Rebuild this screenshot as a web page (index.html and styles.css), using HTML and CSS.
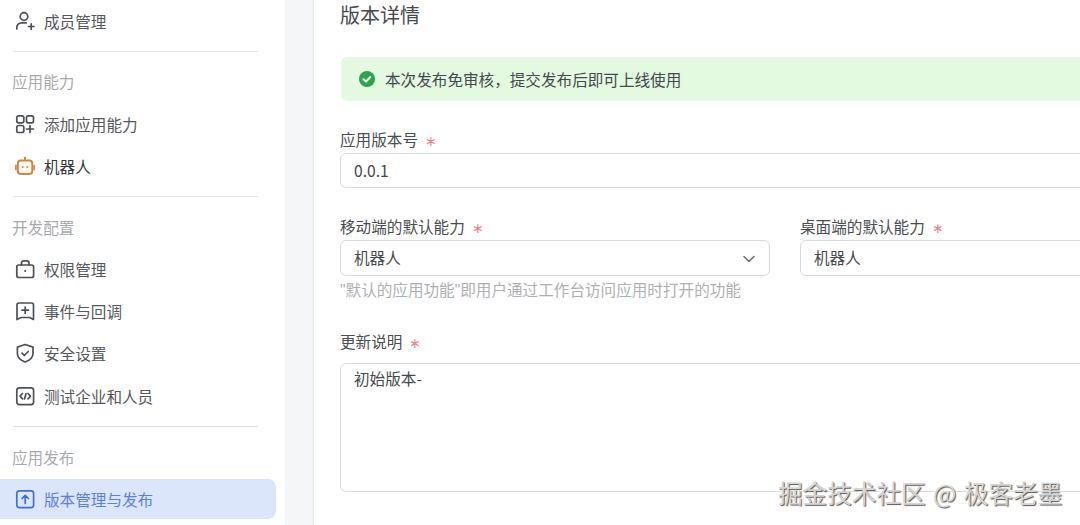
FILE: index.html
```html
<!DOCTYPE html>
<html lang="zh">
<head>
<meta charset="utf-8">
<title>版本详情</title>
<link rel="stylesheet" href="styles.css">
</head>
<body>
<div class="page">
  <nav class="side">
    <a class="item"><svg class="ico" viewBox="0 0 20 20"><circle cx="9" cy="5.500" r="3.800"/><path d="M1.800 18v-1.500c0-2.800 2-4.700 4.800-4.700h4.700"/><path d="M13.500 15.500h5.500M16.200 12.800v5.500"/></svg><span>成员管理</span></a>
    <hr class="rule rule-a">
    <div class="head">应用能力</div>
    <a class="item"><svg class="ico" viewBox="0 0 20 20"><rect x="1.800" y="1.800" width="7" height="7" rx="1.800"/><rect x="11.500" y="1.800" width="7" height="7" rx="1.800"/><rect x="1.800" y="11.500" width="7" height="7" rx="1.800"/><path d="M11.500 15h7M15 11.500v7"/></svg><span>添加应用能力</span></a>
    <a class="item"><svg class="ico ico-bot" viewBox="0 0 20 20"><rect class="face" x="2.800" y="4.500" width="14.500" height="13.500" rx="3"/><path d="M10 4.500V2.500"/><path d="M.9 9.500v4M19.100 9.500v4"/><circle class="dot" cx="10" cy="1.900" r="1.200"/><circle class="dot" cx="7.700" cy="11" r=".9"/><circle class="dot" cx="12.300" cy="11" r=".9"/></svg><span class="dark">机器人</span></a>
    <hr class="rule rule-b">
    <div class="head head-b">开发配置</div>
    <a class="item"><svg class="ico" viewBox="0 0 20 20"><rect x="1.800" y="6" width="16.800" height="12.500" rx="2"/><path d="M6.500 6V4.200C6.500 2.800 7.500 1.800 9 1.800h2.500C13 1.800 14 2.800 14 4.200V6"/><circle class="dot-d" cx="10.200" cy="12" r="1.100"/></svg><span>权限管理</span></a>
    <a class="item"><svg class="ico" viewBox="0 0 20 20"><path d="M2 4c0-1.100.9-2 2-2h12.500c1.100 0 2 .9 2 2v14.500l-4-2h-8.500l-4 2z"/><path d="M7 9.200h6.500M10.200 6v6.500"/></svg><span>事件与回调</span></a>
    <a class="item"><svg class="ico" viewBox="0 0 20 20"><path d="M10.200 1.500l7.800 2.600v6.400c0 4.200-3.200 6.800-7.800 8.500-4.600-1.700-7.800-4.300-7.800-8.500V4.100z"/><path d="M7 10.200l2.300 2.300 4-4"/></svg><span>安全设置</span></a>
    <a class="item item-last"><svg class="ico" viewBox="0 0 20 20"><rect x="1.800" y="1.800" width="16.800" height="16.800" rx="2.500"/><path d="M7.500 7.500l-2.500 2.700 2.500 2.700M13 7.500l2.500 2.700-2.500 2.700M11 7.500l-1.500 5.500"/></svg><span>测试企业和人员</span></a>
    <hr class="rule rule-c">
    <div class="head">应用发布</div>
    <a class="item active"><svg class="ico" viewBox="0 0 20 20"><rect x="1.800" y="1.800" width="16.800" height="16.800" rx="2.500"/><path d="M10.200 14.500v-8M7 9.500l3.200-3.200 3.200 3.200"/></svg><span>版本管理与发布</span></a>
  </nav>
  <div class="gutter"></div>
  <main class="main">
    <h1 class="title">版本详情</h1>
    <div class="alert">
      <svg class="ok" viewBox="0 0 16 16"><circle cx="8" cy="8" r="8"/><path d="M4.500 8.200l2.500 2.400 4.300-4.600"/></svg>
      <span>本次发布免审核&#xFF0C;提交发布后即可上线使用</span>
    </div>
    <div class="field f1">
      <label class="lab">应用版本号<i>∗</i></label>
      <div class="box wide">0.0.1</div>
    </div>
    <div class="cols">
      <div class="field">
        <label class="lab">移动端的默认能力<i>∗</i></label>
        <div class="box sel">机器人
          <svg class="chev" viewBox="0 0 12 8"><path d="M1 1.500l5 5 5-5"/></svg>
        </div>
        <p class="hint">"默认的应用功能"即用户通过工作台访问应用时打开的功能</p>
      </div>
      <div class="field">
        <label class="lab">桌面端的默认能力<i>∗</i></label>
        <div class="box sel">机器人</div>
      </div>
    </div>
    <div class="field f3">
      <label class="lab lab-t">更新说明<i>∗</i></label>
      <div class="box area">初始版本-</div>
    </div>
  </main>
</div>
<div class="mark">掘金技术社区 @ 极客老墨</div>
</body>
</html>
```
FILE: styles.css
```css
* { box-sizing: border-box; }
html, body { margin: 0; height: 525px; overflow: hidden; background: #fff; }
body {
  font-family: "Noto Sans CJK SC", "Liberation Sans", sans-serif;
  font-size: 15.600px;
  color: #4a4d52;
  position: relative;
}
.page { display: flex; height: 525px; width: 1080px; overflow: hidden; }
.side { width: 285px; flex: none; background: #fff; }
.gutter { width: 29px; flex: none; background: #f5f6f7; border-right: 1px solid #e6e7ea; }
.main { flex: 1; min-width: 0; padding: 0 0 0 26px; overflow: hidden; }

.item {
  display: flex; align-items: center; gap: 9px;
  height: 42px; width: 276px; padding-left: 15px;
  color: #55585d;
}
.item-last { margin-top: 1px; }
.item .dark { color: #33363a; }
.ico { width: 20px; height: 20px; flex: none; fill: none; stroke: #4d5055; stroke-width: 1.700; stroke-linecap: round; stroke-linejoin: round; }
.ico-bot { stroke: #c98a45; overflow: visible; }
.ico-bot .face { fill: #fdf6ec; stroke-width: 2; }
.ico-bot .dot { fill: #c98a45; stroke: none; }
.dot-d { fill: #4d5055; stroke: none; }
.rule { border: 0; height: 1px; background: #e6e7e9; margin: 9px 0 0 13px; width: 245px; }
.rule-c { background: #dcdde0; }
.head { height: 42px; line-height: 42px; padding-left: 12px; margin-top: 9px; color: #a8aaae; }
.rule-a + .head { margin-top: 8px; margin-bottom: 1px; }
.active { height: 40px; margin-top: 1px; border-radius: 0 8px 8px 0; background: #dce6fb; color: #5b80dd; }
.active .ico { stroke: #3f6fdc; }

.title { margin: 0; font-size: 20px; font-weight: 400; line-height: 30px; color: #46494d; }
.alert {
  display: flex; align-items: center; gap: 10px;
  margin: 27px 0 0 1px; height: 44px; padding-left: 18px;
  border-radius: 6px 0 0 6px; background: #e3f9e0; color: #45484c; width: 760px;
}
.ok { width: 16px; height: 16px; flex: none; fill: #2ea44f; }
.ok path { fill: none; stroke: #fff; stroke-width: 2; stroke-linecap: round; stroke-linejoin: round; }

.field { display: block; }
.f1 { margin-top: 27px; }
.f3 { margin-top: 26px; }
.lab { display: block; height: 25px; line-height: 22px; color: #4a4d52; }
.lab i { font-style: normal; font-size: 14px; color: #ea8584; margin-left: 7px; }
.lab-t { height: 34px; line-height: 24px; }
.box {
  position: relative; display: flex; align-items: center;
  height: 36px; padding: 0 0 2px 13px;
  border: 1px solid #d9dadc; border-radius: 6px; background: #fff; color: #45484c;
}
.wide { width: 890px; height: 35px; }
.sel { width: 430px; }
.cols { display: flex; gap: 30px; margin-top: 27px; width: 890px; }
.cols .field { flex: none; width: 430px; }
.chev { position: absolute; right: 14px; top: 14px; width: 12px; height: 8px; fill: none; stroke: #6b6e73; stroke-width: 1.600; stroke-linecap: round; stroke-linejoin: round; }
.hint { margin: 3px 0 0; height: 24px; line-height: 24px; font-family: "Liberation Sans", "Noto Sans CJK SC", sans-serif; color: #aeb0b4; white-space: nowrap; }
.area { width: 890px; height: 129px; align-items: flex-start; padding-top: 3px; }

.mark {
  position: absolute; left: 778px; top: 475px;
  font-size: 24.600px; line-height: 34px; white-space: nowrap;
  word-spacing: 2px;
  color: #d4d4d4;
  text-shadow: 1px 1px 1px #555, -1px -1px 0 #fff;
}
```
